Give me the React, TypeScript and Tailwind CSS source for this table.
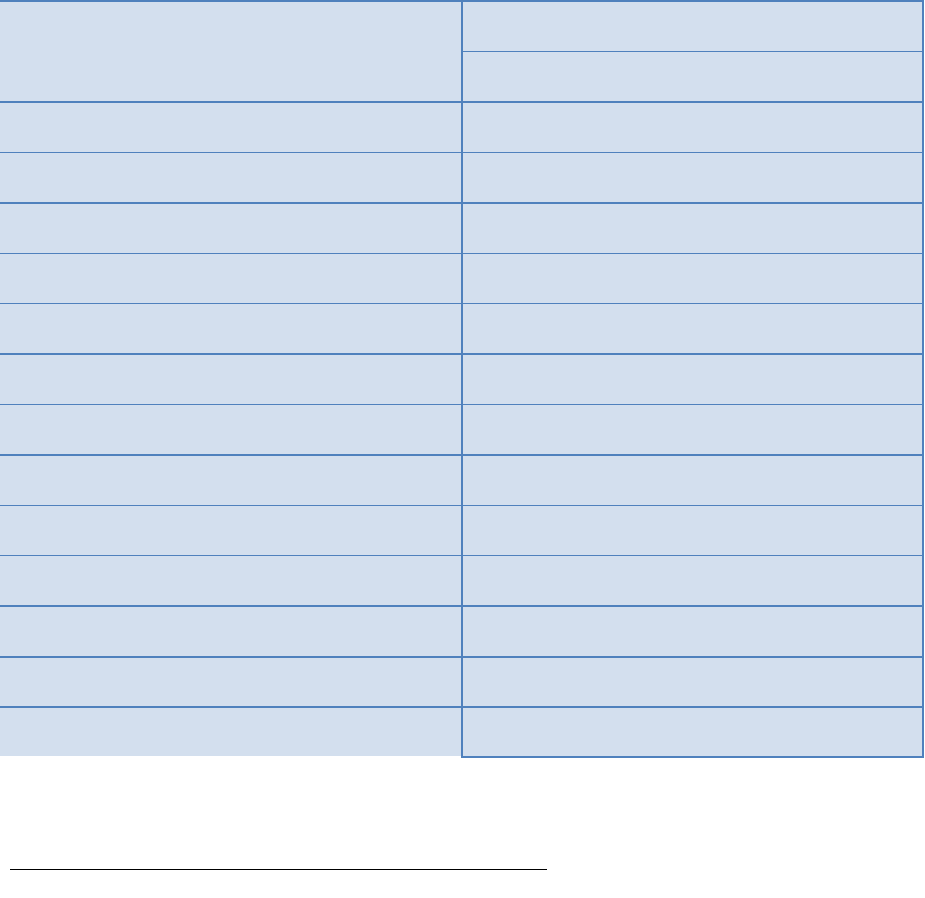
const rows = [
  { h: "h-[50px]", thick: false },
  { h: "h-[51px]", thick: true },
  { h: "h-[50px]", thick: false },
  { h: "h-[50px]", thick: false },
  { h: "h-[51px]", thick: true },
  { h: "h-[50px]", thick: false },
  { h: "h-[51px]", thick: true },
  { h: "h-[50px]", thick: false },
  { h: "h-[50px]", thick: false },
  { h: "h-[51px]", thick: true },
  { h: "h-[51px]", thick: true },
  { h: "h-[50px]", thick: true },
];

export default function App() {
  return (
    <div className="w-[925px] h-[898px] bg-white">
      <div className="w-[924px] border-t-2 border-[#4f81bd]">
        {/* header row */}
        <div className="flex h-[101px] border-b-2 border-[#4f81bd] bg-[#d3dfee]">
          <div className="w-[461px]" />
          <div className="flex-1 flex flex-col border-l-2 border-r-2 border-[#4f81bd]">
            <div className="h-[50px] border-b border-[#4f81bd]" />
            <div className="flex-1" />
          </div>
        </div>
        {rows.map((r, i) => (
          <div key={i} className={`flex ${r.h}`}>
            <div
              className={
                r.thick
                  ? "w-[461px] bg-[#d3dfee] border-b-2 border-[#4f81bd]"
                  : "w-[461px] bg-[#d3dfee] border-b border-[#4f81bd]"
              }
            />
            <div
              className={
                r.thick
                  ? "flex-1 bg-[#d3dfee] border-l-2 border-r-2 border-b-2 border-[#4f81bd]"
                  : "flex-1 bg-[#d3dfee] border-l-2 border-r-2 border-b border-[#4f81bd]"
              }
            />
          </div>
        ))}
        {/* last row: left cell has no bottom rule */}
        <div className="flex items-start h-[50px]">
          <div className="w-[461px] h-[48px] bg-[#d3dfee]" />
          <div className="flex-1 h-[50px] bg-[#d3dfee] border-l-2 border-r-2 border-b-2 border-[#4f81bd]" />
        </div>
      </div>
      <div className="ml-[10px] mt-[111px] w-[537px] border-t border-black" />
    </div>
  );
}
